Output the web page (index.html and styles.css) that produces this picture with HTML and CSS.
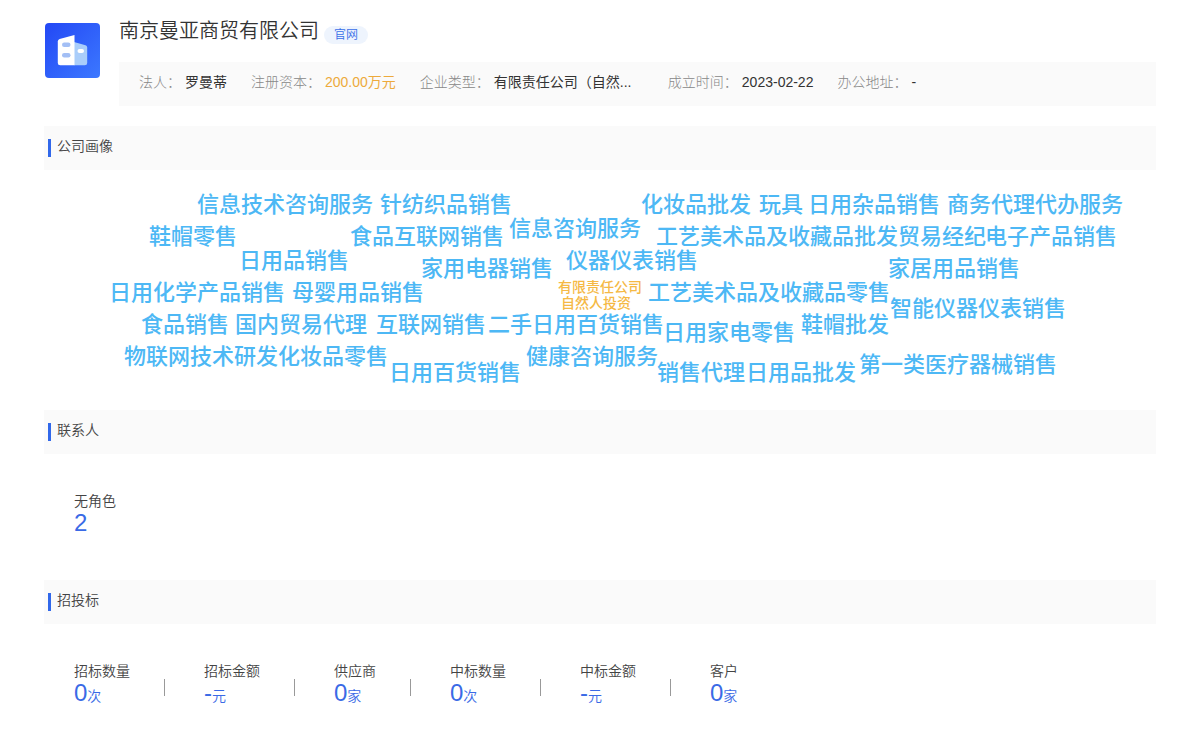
FILE: index.html
```html
<!DOCTYPE html>
<html lang="zh-CN">
<head>
<meta charset="utf-8">
<title>南京曼亚商贸有限公司</title>
<link rel="stylesheet" href="styles.css">
</head>
<body>
<main class="page">
  <header class="company">
    <svg class="logo" viewBox="0 0 55 55" aria-hidden="true">
      <defs>
        <linearGradient id="bg" x1="0" y1="0" x2="1" y2="1">
          <stop offset="0" stop-color="#2348f5"/>
          <stop offset="1" stop-color="#3c78ff"/>
        </linearGradient>
      </defs>
      <rect width="55" height="55" rx="4" fill="url(#bg)"/>
      <path d="M29 19l11.500 3.200q1.700.5 1.700 2.200v15.500q0 2.400-2.400 2.400H29z" fill="#a9cdfa"/>
      <path d="M29.500 12v30.300H15.200q-2.400 0-2.400-2.400V18.500q0-2 1.800-2.500z" fill="#fff"/>
      <rect x="17" y="19.500" width="8.500" height="4.400" rx="2.200" fill="#a3bff5"/>
      <rect x="17" y="30" width="8.500" height="4.400" rx="2.200" fill="#a3bff5"/>
      <rect x="32.500" y="26" width="6.500" height="4" rx="2" fill="#fff"/>
    </svg>
    <div class="company-body">
      <div class="title-row">
        <h1 class="title">南京曼亚商贸有限公司</h1>
        <a class="site" href="#">官网</a>
      </div>
      <dl class="facts">
        <div class="fact"><dt>法人：</dt><dd>罗曼蒂</dd></div>
        <div class="fact"><dt>注册资本：</dt><dd class="money">200.00万元</dd></div>
        <div class="fact"><dt>企业类型：</dt><dd class="clip">有限责任公司（自然...</dd></div>
        <div class="fact"><dt>成立时间：</dt><dd>2023-02-22</dd></div>
        <div class="fact"><dt>办公地址：</dt><dd>-</dd></div>
      </dl>
    </div>
  </header>

  <section>
    <h2 class="section-title">公司画像</h2>
    <div class="cloud">
      <span class="word" style="--x:-403px;--y:24px">信息技术咨询服务</span>
      <span class="word" style="--x:-220px;--y:24px">针纺织品销售</span>
      <span class="word" style="--x:41px;--y:24px">化妆品批发</span>
      <span class="word" style="--x:159px;--y:24px">玩具</span>
      <span class="word" style="--x:208px;--y:24px">日用杂品销售</span>
      <span class="word" style="--x:347px;--y:24px">商务代理代办服务</span>
      <span class="word" style="--x:-91px;--y:48px">信息咨询服务</span>
      <span class="word" style="--x:-451px;--y:56px">鞋帽零售</span>
      <span class="word" style="--x:-250px;--y:56px">食品互联网销售</span>
      <span class="word" style="--x:56px;--y:56px">工艺美术品及收藏品批发</span>
      <span class="word" style="--x:298px;--y:56px">贸易经纪</span>
      <span class="word" style="--x:385px;--y:56px">电子产品销售</span>
      <span class="word" style="--x:-361px;--y:80px">日用品销售</span>
      <span class="word" style="--x:-34px;--y:80px">仪器仪表销售</span>
      <span class="word" style="--x:-179px;--y:88px">家用电器销售</span>
      <span class="word" style="--x:288px;--y:88px">家居用品销售</span>
      <span class="word" style="--x:-491px;--y:112px">日用化学产品销售</span>
      <span class="word" style="--x:-308px;--y:112px">母婴用品销售</span>
      <span class="word" style="--x:48px;--y:112px">工艺美术品及收藏品零售</span>
      <span class="word kind" style="--x:-42px;--y:111px">有限责任公司</span>
      <span class="word kind" style="--x:-39px;--y:127px">自然人投资</span>
      <span class="word" style="--x:290px;--y:128px">智能仪器仪表销售</span>
      <span class="word" style="--x:-459px;--y:144px">食品销售</span>
      <span class="word" style="--x:-365px;--y:144px">国内贸易代理</span>
      <span class="word" style="--x:-224px;--y:144px">互联网销售</span>
      <span class="word" style="--x:-112px;--y:144px">二手日用百货销售</span>
      <span class="word" style="--x:201px;--y:144px">鞋帽批发</span>
      <span class="word" style="--x:63px;--y:152px">日用家电零售</span>
      <span class="word" style="--x:-476px;--y:176px">物联网技术研发</span>
      <span class="word" style="--x:-322px;--y:176px">化妆品零售</span>
      <span class="word" style="--x:-74px;--y:176px">健康咨询服务</span>
      <span class="word" style="--x:259px;--y:184px">第一类医疗器械销售</span>
      <span class="word" style="--x:-211px;--y:192px">日用百货销售</span>
      <span class="word" style="--x:57px;--y:192px">销售代理</span>
      <span class="word" style="--x:146px;--y:192px">日用品批发</span>
    </div>
  </section>

  <section>
    <h2 class="section-title">联系人</h2>
    <dl class="stats">
      <div class="stat"><dt>无角色</dt><dd><b>2</b></dd></div>
    </dl>
  </section>

  <section>
    <h2 class="section-title">招投标</h2>
    <dl class="stats">
      <div class="stat"><dt>招标数量</dt><dd><b>0</b>次</dd></div>
      <div class="stat"><dt>招标金额</dt><dd><b>-</b>元</dd></div>
      <div class="stat"><dt>供应商</dt><dd><b>0</b>家</dd></div>
      <div class="stat"><dt>中标数量</dt><dd><b>0</b>次</dd></div>
      <div class="stat"><dt>中标金额</dt><dd><b>-</b>元</dd></div>
      <div class="stat"><dt>客户</dt><dd><b>0</b>家</dd></div>
    </dl>
  </section>
</main>
</body>
</html>
```

FILE: styles.css
```css
* {
  box-sizing: border-box;
}

body {
  margin: 0;
  background: #fff;
  color: #444;
  font: 350 14px/20px "Liberation Sans", "Noto Sans CJK SC", sans-serif;
}

h1, h2, dl, dd {
  margin: 0;
  font-weight: 350;
}

.page {
  padding: 16px 44px 0;
}

.company {
  display: flex;
  gap: 19px;
  padding-left: 1px;
  margin-bottom: 20px;
}

.logo {
  flex: none;
  width: 55px;
  height: 55px;
  margin-top: 7px;
}

.company-body {
  flex: 1;
  min-width: 0;
}

.title-row {
  display: flex;
  align-items: center;
  gap: 5px;
  height: 30px;
  margin-bottom: 16px;
}

.title {
  font-size: 20px;
  line-height: 30px;
  color: #333;
}

.site {
  margin-top: 8px;
  padding: 0 10px;
  border-radius: 9px;
  background: #eef4fd;
  color: #3a6fe8;
  font-size: 12px;
  line-height: 18px;
  text-decoration: none;
}

.facts {
  display: flex;
  flex-wrap: wrap;
  column-gap: 24px;
  min-height: 44px;
  padding: 10px 20px 14px;
  background: #fafafa;
}

.fact {
  display: flex;
  gap: 4px;
}

.fact dt {
  color: #888;
  font-weight: 300;
}

.fact dd {
  color: #333;
  font-weight: 400;
}

.fact .money {
  color: #edaa3c;
}

.fact .clip {
  width: 150px;
  white-space: nowrap;
}

.section-title {
  display: flex;
  align-items: center;
  gap: 6px;
  height: 44px;
  padding: 0 4px 4px;
  background: #fafafa;
  font-size: 14px;
  line-height: 20px;
}

.section-title::before {
  content: "";
  width: 3px;
  height: 18px;
  margin-top: 4px;
  background: #3168ea;
}

.cloud {
  position: relative;
  height: 240px;
}

.word {
  position: absolute;
  left: calc(50% + var(--x));
  top: calc(var(--y) - 3px);
  color: #4db8f5;
  font-family: "Noto Sans CJK SC", sans-serif;
  font-size: 22px;
  font-weight: 500;
  line-height: 22px;
  white-space: nowrap;
}

.kind {
  color: #f5b945;
  font-size: 14px;
  line-height: 16px;
}

.stats {
  display: flex;
  padding: 37px 30px 45px;
}

.stat {
  display: flex;
  flex-direction: column;
  position: relative;
  padding-right: 74px;
}

.stat:not(:last-child)::after {
  content: "";
  position: absolute;
  right: 39px;
  top: 18px;
  width: 1px;
  height: 17px;
  background: #999;
}

.stat dd {
  display: flex;
  align-items: baseline;
  height: 24px;
  color: #3a6ae6;
}

.stat b {
  font-size: 24px;
  font-weight: 400;
  line-height: 24px;
}
```
